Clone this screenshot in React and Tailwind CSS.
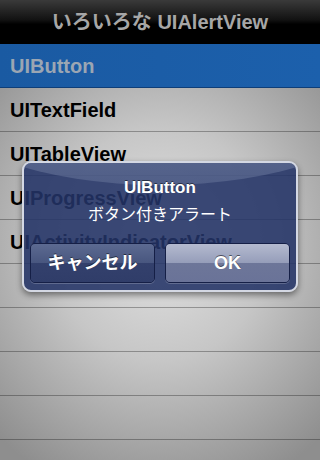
import React from "react";

const font = { fontFamily: '"Liberation Sans", "Noto Sans CJK JP", sans-serif' };

const rows = [
  "UITextField",
  "UITableView",
  "UIProgressView",
  "UIActivityIndicatorView",
  "",
  "",
  "",
  "",
];

function AlertButton({ label, light }) {
  return (
    <div className="flex-1 h-[40px] rounded-[5px] border border-[#151f46] shadow-[0_1px_0_rgba(255,255,255,0.2)] overflow-hidden relative">
      <div
        className={`absolute inset-0 ${
          light
            ? "bg-[linear-gradient(to_bottom,#b4bacf_0%,#959db9_50%,#6d7699_51%,#6a7398_100%)]"
            : "bg-[linear-gradient(to_bottom,#5c6a91_0%,#48567f_50%,#33406c_51%,#303d69_100%)]"
        }`}
      />
      <div className="relative h-full flex items-center justify-center text-white font-bold text-[18px] [text-shadow:0_-1px_0_rgba(0,0,0,0.55)]">
        {label}
      </div>
    </div>
  );
}

export default function App() {
  return (
    <div className="relative w-[320px] h-[460px] overflow-hidden bg-[#8c8c8c]" style={font}>
      {/* nav bar */}
      <div className="h-[44px] flex items-center justify-center bg-[linear-gradient(to_bottom,#3a3a3a_0%,#121212_45%,#000_55%,#000_100%)]">
        <span className="text-[20px] font-bold text-[#a6a6a6]">いろいろな UIAlertView</span>
      </div>

      {/* selected row */}
      <div className="h-[44px] flex items-center pl-[10px] bg-[linear-gradient(to_right,#1a5aa2,#1c60ac)] border-b border-[#0e3e78]">
        <span className="text-[20px] font-bold text-[#9ba6b3]">UIButton</span>
      </div>

      {/* list */}
      <div className="h-[372px] bg-[radial-gradient(ellipse_75%_70%_at_50%_42%,#e2e2e2_0%,#c6c6c6_45%,#8e8e8e_100%)]">
        {rows.map((r, i) => (
          <div
            key={i}
            className="h-[44px] flex items-center pl-[10px] border-b border-black/30"
          >
            <span className="text-[20px] font-bold text-black">{r}</span>
          </div>
        ))}
      </div>

      {/* alert */}
      <div className="absolute left-[22px] top-[161px] w-[276px] h-[131px] rounded-[9px] border-2 border-[#d4d8e3] bg-[#233366]/[0.88] shadow-[0_3px_6px_rgba(0,0,0,0.45)] overflow-hidden">
        <div className="absolute left-[-30%] w-[160%] top-[-140px] h-[162px] rounded-[50%] bg-[linear-gradient(to_bottom,rgba(160,172,200,0.55),rgba(110,124,160,0.45))]" />
        <div className="relative flex flex-col items-center">
          <div className="mt-[15px] text-[17px] font-bold text-white leading-[20px] [text-shadow:0_-1px_0_rgba(0,0,0,0.5)]">
            UIButton
          </div>
          <div className="mt-[7px] text-[16px] text-white leading-[20px]">ボタン付きアラート</div>
        </div>
        <div className="absolute left-[6px] right-[6px] top-[80px] flex gap-[10px]">
          <AlertButton label="キャンセル" />
          <AlertButton label="OK" light />
        </div>
      </div>
    </div>
  );
}
